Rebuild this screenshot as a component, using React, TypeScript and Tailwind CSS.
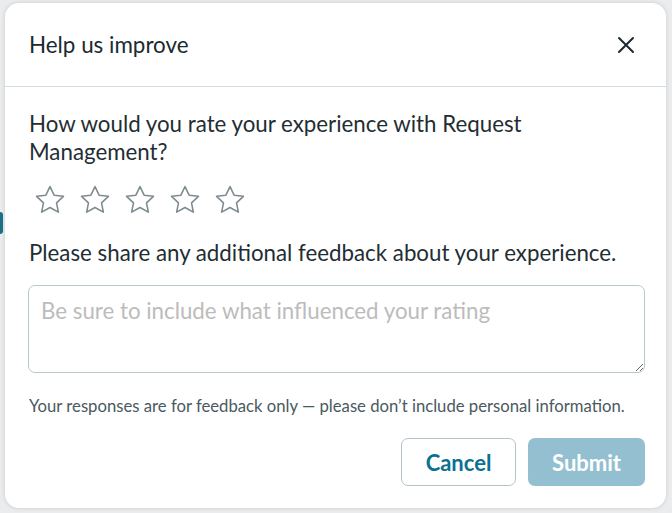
import React from "react";

function Star() {
  return (
    <svg width="34" height="34" viewBox="0 0 24 24" fill="none" stroke="#7d8b8f" strokeWidth="1.1" strokeLinejoin="round">
      <path d="M12 2.5l2.9 6.1 6.6.8-4.9 4.6 1.3 6.6L12 17.3l-5.9 3.3 1.3-6.6-4.9-4.6 6.6-.8z" />
    </svg>
  );
}

export default function App() {
  return (
    <div className="w-[672px] h-[513px] bg-[#ebeced] overflow-hidden relative" style={{ fontFamily: "Lato, 'Noto Sans', sans-serif" }}>
      <div className="absolute left-0 top-[212px] w-[3px] h-[22px] bg-[#1d6f86] rounded-r" />
      <div className="ml-[5px] mt-[3px] w-[661px] h-[505px] bg-white rounded-[14px] shadow-[0_0_4px_rgba(0,0,0,0.15)] flex flex-col">
        <div className="h-[84px] flex items-center justify-between pl-[24px] pr-[30px] border-b border-[#d3dee2]">
          <div className="text-[22.4px] text-[#1c2a30]">Help us improve</div>
          <svg width="20" height="20" viewBox="0 0 20 20" stroke="#1c2a30" strokeWidth="2" strokeLinecap="round">
            <path d="M3 3l14 14M17 3L3 17" />
          </svg>
        </div>
        <div className="px-[24px] pt-[23px] flex flex-col">
          <div className="text-[22.3px] leading-[28px] text-[#1f2e34] w-[560px]">
            How would you rate your experience with Request Management?
          </div>
          <div className="flex gap-[11px] mt-[16px] ml-[4px] h-[36px] items-center">
            <Star />
            <Star />
            <Star />
            <Star />
            <Star />
          </div>
          <div className="text-[22.3px] leading-[28px] text-[#1f2e34] mt-[21px]">
            Please share any additional feedback about your experience.
          </div>
          <textarea
            className="mt-[18px] -ml-[1px] w-[617px] h-[88px] border border-[#b7c9cf] rounded-[7px] px-[12px] pt-[11px] pb-[6px] text-[22.3px] leading-[28px] text-[#1f2e34] placeholder:text-[#bcbcbc] outline-none resize-y"
            placeholder="Be sure to include what influenced your rating"
            style={{ fontFamily: "Lato, 'Noto Sans', sans-serif" }}
          />
          <div className="mt-[22px] text-[16.7px] leading-[22px] text-[#4a5a60]">
            Your responses are for feedback only — please don’t include personal information.
          </div>
          <div className="mt-[21px] flex justify-end gap-[12px] -mr-[3px]">
            <button className="w-[115px] h-[48px] rounded-[7px] border border-[#b4c4ca] bg-white text-[22px] font-bold text-[#0b7092]">
              Cancel
            </button>
            <button className="w-[117px] h-[48px] rounded-[7px] bg-[#93bfd0] text-[22px] font-bold text-white">
              Submit
            </button>
          </div>
        </div>
      </div>
    </div>
  );
}
